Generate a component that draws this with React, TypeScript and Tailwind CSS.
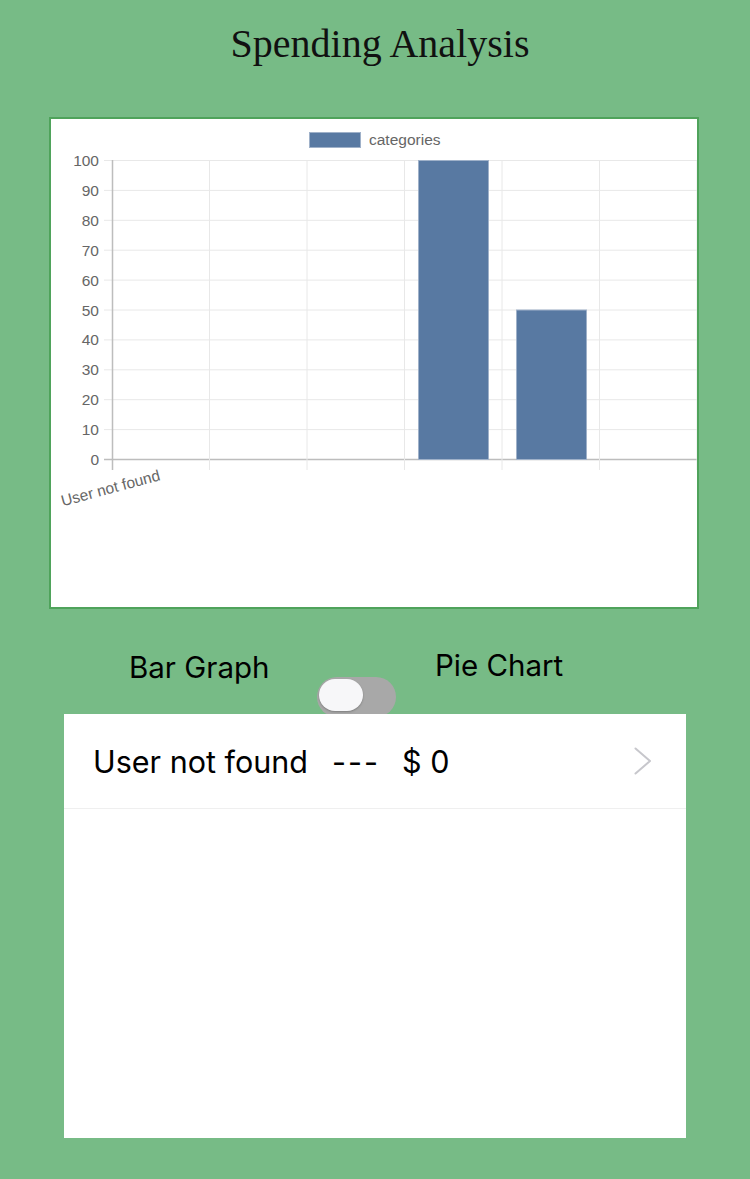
const yTicks = [100, 90, 80, 70, 60, 50, 40, 30, 20, 10, 0]
const colLines = [209.5, 307, 404.5, 502, 599.5, 697]

const bars = [
  { x: 418, value: 100 },
  { x: 516, value: 50 },
]

const top = 160
const zero = 459
const step = (zero - top) / 10

function BarChart() {
  return (
    <svg
      viewBox="51 119 646 488"
      className="block w-full h-full"
      style={{ fontFamily: '"Liberation Sans", Arial, sans-serif' }}
    >
      {/* legend */}
      <rect x={309.5} y={132.5} width={51} height={15} fill="#5879a2" stroke="#9fb1c9" strokeWidth={1} />
      <text x={369} y={145} fontSize={15.5} fill="#666">
        categories
      </text>

      {/* horizontal grid */}
      {yTicks.map((t, i) => {
        const y = top + i * step + 0.5
        return (
          <g key={t}>
            <line x1={104} x2={697} y1={y} y2={y} stroke={t === 0 ? '#bdbdbd' : '#e8e8e8'} strokeWidth={t === 0 ? 1.5 : 1} />
            <text x={99} y={y + 5.5} fontSize={15.5} fill="#666" textAnchor="end">
              {t}
            </text>
          </g>
        )
      })}

      {/* vertical grid */}
      {colLines.map((x) => (
        <line key={x} x1={x} x2={x} y1={top} y2={470} stroke="#e8e8e8" strokeWidth={1} />
      ))}
      <line x1={112.5} x2={112.5} y1={top} y2={470} stroke="#bdbdbd" strokeWidth={1.5} />

      {/* bars */}
      {bars.map((b) => {
        const h = (b.value / 100) * (zero - top)
        return (
          <rect
            key={b.x}
            x={b.x + 0.5}
            y={zero - h + 0.5}
            width={70}
            height={h}
            fill="#5879a2"
            stroke="#9fb1c9"
            strokeWidth={1}
          />
        )
      })}

      {/* x label */}
      <text
        x={161}
        y={480}
        fontSize={15.5}
        fill="#666"
        textAnchor="end"
        transform="rotate(-15 161 480)"
      >
        User not found
      </text>
    </svg>
  )
}

function Chevron() {
  return (
    <svg width="18" height="28" viewBox="0 0 18 28" fill="none">
      <polyline points="1.5,1.5 16,14 1.5,26.5" stroke="#c7c7cc" strokeWidth="2" strokeLinecap="round" strokeLinejoin="round" />
    </svg>
  )
}

export default function App() {
  return (
    <div className="w-[750px] h-[1179px] bg-[#77bb86] overflow-hidden" style={{ fontFamily: 'Inter, "Liberation Sans", sans-serif' }}>
      {/* title */}
      <div className="h-[117px] pt-[24px] pl-[10px] text-center">
        <h1 className="text-[40px] leading-none text-[#111]" style={{ fontFamily: '"Liberation Serif", "DejaVu Serif", serif' }}>
          Spending Analysis
        </h1>
      </div>

      {/* chart card */}
      <div className="ml-[49px] w-[650px] h-[492px] border-2 border-[#4fa35b] bg-white">
        <BarChart />
      </div>

      {/* toggle row */}
      <div className="flex h-[105px] text-[29.5px] leading-none text-black">
        <div className="w-[317px] pl-[129px] pt-[44px]">Bar Graph</div>
        <div className="w-[79px] pt-[68px]">
          <div className="h-[37px] overflow-hidden">
            <div className="h-[40px] w-[79px] rounded-full bg-[#a8a8a8] p-[2px]">
              <div className="h-[32px] w-[44px] rounded-full bg-[#f7f7f9] shadow-[0_1px_2px_rgba(0,0,0,0.25)]" />
            </div>
          </div>
        </div>
        <div className="pl-[39px] pt-[42px]">Pie Chart</div>
      </div>

      {/* list */}
      <div className="relative ml-[64px] w-[622px] h-[424px] bg-white">
        <div className="flex h-[95px] items-center justify-between border-b border-[#efefef] pl-[29px] pr-[34px] text-[30.5px] text-black">
          <div className="flex items-center pt-[2px]">
            <span>User not found</span>
            <span className="ml-[24px] tracking-[2px]">---</span>
            <span className="ml-[22px]">$ 0</span>
          </div>
          <Chevron />
        </div>
      </div>
    </div>
  )
}
